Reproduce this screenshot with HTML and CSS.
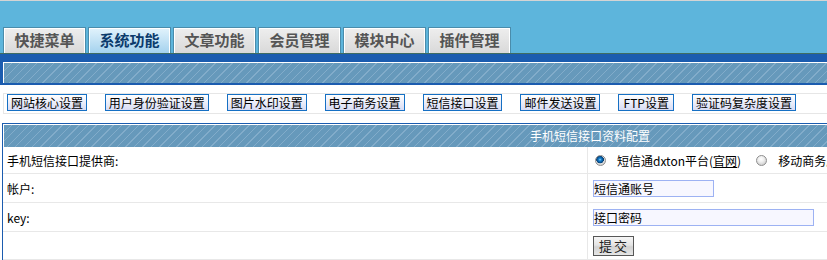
FILE: index.html
```html
<!DOCTYPE html>
<html lang="zh-CN">
<head>
<meta charset="utf-8">
<title>系统功能 - 手机短信接口</title>
<link rel="stylesheet" href="styles.css">
</head>
<body>
<div class="page">
  <div class="topbar">
    <div class="tabs">
      <div class="tab">快捷菜单</div>
      <div class="tab active">系统功能</div>
      <div class="tab">文章功能</div>
      <div class="tab">会员管理</div>
      <div class="tab">模块中心</div>
      <div class="tab">插件管理</div>
    </div>
  </div>
  <div class="band"><div class="band-inner"></div></div>
  <div class="links">
    <a class="lbtn">网站核心设置</a>
    <a class="lbtn">用户身份验证设置</a>
    <a class="lbtn">图片水印设置</a>
    <a class="lbtn">电子商务设置</a>
    <a class="lbtn">短信接口设置</a>
    <a class="lbtn">邮件发送设置</a>
    <a class="lbtn ftp">FTP设置</a>
    <a class="lbtn">验证码复杂度设置</a>
  </div>
  <div class="panel">
    <div class="panel-head">手机短信接口资料配置</div>
    <div class="row r1">
      <div class="lab">手机短信接口提供商:</div>
      <div class="val">
        <span class="radio checked"></span>
        <span class="opt">短信通dxton平台(<span class="ul">官网</span>)</span>
        <span class="radio"></span>
        <span class="opt">移动商务应用中心(<span class="ul">官网</span>)</span>
      </div>
    </div>
    <div class="row r2">
      <div class="lab">帐户:</div>
      <div class="val"><div class="inp short">短信通账号</div></div>
    </div>
    <div class="row r3">
      <div class="lab">key:</div>
      <div class="val"><div class="inp long">接口密码</div></div>
    </div>
    <div class="row r4">
      <div class="lab"></div>
      <div class="val"><div class="sbtn">提交</div></div>
    </div>
  </div>
</div>
</body>
</html>
```

FILE: styles.css
```css
html, body {
  margin: 0;
  padding: 0;
  overflow: hidden;
  background: #fff;
}
.page {
  width: 1176px;
  font-family: "Noto Sans CJK SC", sans-serif;
  font-size: 12px;
  color: #000;
}
.topbar {
  border-top: 1px solid #d4d4d4;
  border-bottom: 1px solid #3f6c62;
  background: #5db5dc;
  height: 52px;
  box-sizing: content-box;
}
.tabs {
  display: flex;
  gap: 2px;
  padding: 26px 0 0 3px;
}
.tab {
  width: 83px;
  height: 26px;
  box-sizing: border-box;
  border: 1px solid #4a8cab;
  border-bottom: none;
  box-shadow: inset 1px 1px 0 #fff, inset -1px 0 0 #fff;
  background: linear-gradient(#eeeeee, #d9d9d9);
  color: #555;
  font-weight: bold;
  font-size: 15px;
  line-height: 24px;
  text-align: center;
}
.tab.active {
  background: linear-gradient(#e2f3fc, #a4d2ee);
  color: #0b3b6c;
}
.band {
  background: #1b5caf;
  padding: 8px 0 2px 3px;
}
.band-inner {
  height: 20px;
  border-top: 1px solid #fff;
  border-left: 1px solid #fff;
  background: repeating-linear-gradient(135deg, #6699bb 0 5px, #82acca 5px 6px);
}
.links {
  margin: 8px 0 0 3px;
  border: 1px solid #e6e6e6;
  border-right: none;
  padding: 0 0 2px 3px;
  display: flex;
  gap: 18px;
  align-items: flex-start;
}
.lbtn {
  height: 17px;
  box-sizing: border-box;
  border: 1px solid #1670c4;
  background: linear-gradient(#ffffff, #d8dcf4);
  padding: 0 2.95px;
  line-height: 15px;
  color: #000;
  white-space: nowrap;
}
.lbtn.ftp { padding: 0 4.2px; }
.panel {
  margin: 9px 0 0 2px;
  border-top: 1px solid #1b5caf;
  border-left: 1px solid #1b5caf;
}
.panel-head {
  height: 22px;
  border-top: 1px solid #fff;
  border-left: 1px solid #fff;
  background: repeating-linear-gradient(135deg, #6699bb 0 5px, #82acca 5px 6px);
  color: #fff;
  text-align: center;
  line-height: 22px;
}
.row {
  display: grid;
  grid-template-columns: 585px 1fr;
  border-bottom: 1px solid #e8e8e8;
}
.r1 { height: 26px; }
.r2, .r3 { height: 28px; }
.r4 { height: 27px; }
.lab {
  border-right: 1px solid #e8e8e8;
  padding-left: 4px;
  display: flex;
  align-items: center;
}
.val {
  display: flex;
  align-items: center;
  padding-left: 5px;
  white-space: nowrap;
}
.radio {
  width: 11px;
  height: 11px;
  box-sizing: border-box;
  border-radius: 50%;
  border: 1px solid #8e8e8e;
  background: radial-gradient(circle at 45% 35%, #ffffff 0, #f0f0f0 35%, #bdbdbd 100%);
  margin-left: 3px;
  flex: none;
}
.radio.checked {
  margin-left: 2px;
  background:
    radial-gradient(circle at 45% 40%, #9fe0ff 0, #1b86d6 1.2px, #05508f 3px, #0a3a6a 3.6px, rgba(255,255,255,0) 4px),
    radial-gradient(circle at 45% 35%, #ffffff 0, #ececec 50%, #b5b5b5 100%);
}
.opt {
  margin-left: 11px;
  margin-right: 12px;
}
.ul { text-decoration: underline; }
.inp {
  height: 17px;
  box-sizing: border-box;
  border: 1px solid #9db2f3;
  background: #f7f7ff;
  line-height: 15px;
}
.inp.short { width: 121px; }
.inp.long { width: 221px; }
.sbtn {
  width: 41px;
  height: 20px;
  box-sizing: border-box;
  border: 1px solid #575757;
  background: linear-gradient(#f6f6f6, #e4e4e4 45%, #d2d2d2 55%, #e6e6e6);
  text-align: center;
  line-height: 18px;
  letter-spacing: 2px;
  padding-left: 1px;
  color: #222;
  font-size: 13px;
}
```
